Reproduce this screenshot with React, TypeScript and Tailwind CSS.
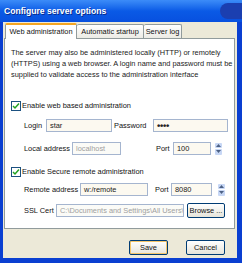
import React from "react";

const font = { fontFamily: '"Liberation Sans", Arial, sans-serif' };

function Check() {
  return (
    <div className="w-[10px] h-[10px] border border-[#1c5180] bg-white flex items-center justify-center shrink-0">
      <svg width="8" height="8" viewBox="0 0 8 8">
        <path d="M1 4 L3 6 L7 1.5" stroke="#21a121" strokeWidth="1.5" fill="none" />
      </svg>
    </div>
  );
}

function Spinner({ ml }: { ml: string }) {
  return (
    <div className={`w-[7px] h-[12px] flex flex-col gap-[1px] ${ml}`}>
      <div className="flex-1 bg-[#c7d7f5] rounded-[1px] flex items-center justify-center">
        <svg width="5" height="3" viewBox="0 0 5 3"><path d="M0 3 L2.5 0 L5 3Z" fill="#4d6185" /></svg>
      </div>
      <div className="flex-1 bg-[#c7d7f5] rounded-[1px] flex items-center justify-center">
        <svg width="5" height="3" viewBox="0 0 5 3"><path d="M0 0 L2.5 3 L5 0Z" fill="#4d6185" /></svg>
      </div>
    </div>
  );
}

function Input({ w, value, disabled, dots }: { w: string; value: string; disabled?: boolean; dots?: boolean }) {
  return (
    <div
      className={`${w} h-[13px] shrink-0 border border-[#a5b5cf] ${disabled ? "bg-[#fbfbf7] text-[#a0a0a0]" : "bg-[#fcf9f0] text-[#222]"} flex items-center pl-[3px] text-[7.4px] leading-none overflow-hidden whitespace-nowrap`}
    >
      {dots ? <span className="text-[9.5px] font-bold tracking-[-0.3px]">••••</span> : value}
    </div>
  );
}

const btn =
  "h-[15px] shrink-0 border border-[#003c74] rounded-[2px] bg-gradient-to-b from-white to-[#e6e4da] flex items-center justify-center text-[7.4px] whitespace-nowrap";

export default function App() {
  return (
    <div className="w-[242px] h-[263px] bg-[#0a3fd1] relative overflow-hidden text-[#111]" style={font}>
      {/* title bar */}
      <div className="h-[22px] bg-gradient-to-b from-[#3c8cf8] via-[#0a5ae6] to-[#0850df] relative flex items-center pl-[4px]">
        <span className="text-white font-bold text-[8.6px] [text-shadow:1px_1px_0_#0a2b8a] whitespace-nowrap">Configure server options</span>
        <div className="absolute right-[-10px] top-[3px] w-[32px] h-[16px] rounded-[8px] bg-[#1b3fb0]" />
      </div>
      {/* body */}
      <div className="absolute left-[3px] right-[5px] top-[22px] bottom-[5px] bg-[#ece9d8] flex flex-col">
        {/* tabs */}
        <div className="flex items-end h-[16px] pl-[2px] whitespace-nowrap">
          <div className="w-[72px] h-[16px] bg-white border border-b-0 border-[#919b9c] border-t-[2px] border-t-[#f5a623] rounded-t-[2px] text-[7.4px] flex items-center justify-center relative z-10 -mb-[1px]">
            Web administration
          </div>
          <div className="w-[67px] h-[14px] bg-gradient-to-b from-white to-[#ecebe5] border border-b-0 border-l-0 border-[#919b9c] rounded-t-[2px] text-[7.4px] flex items-center justify-center">
            Automatic startup
          </div>
          <div className="w-[38px] h-[14px] bg-gradient-to-b from-white to-[#ecebe5] border border-b-0 border-l-0 border-[#919b9c] rounded-t-[2px] text-[7.4px] flex items-center justify-center">
            Server log
          </div>
        </div>
        {/* panel */}
        <div className="ml-[1px] mr-[2px] h-[191px] shrink-0 bg-white border border-[#919b9c] pl-[6px] pr-[4px] pt-[8px] text-[7.4px] leading-[11px] whitespace-nowrap">
          <p className="text-[7.4px] leading-[11px] text-[#222]">
            The server may also be administered locally (HTTP) or remotely
            <br />
            (HTTPS) using a web browser. A login name and password must be
            <br />
            supplied to validate access to the administration interface
          </p>
          <div className="flex items-center gap-[1px] mt-[20px] h-[11px]">
            <Check />
            <span>Enable web based administration</span>
          </div>
          <div className="flex items-center mt-[8px] pl-[13px]">
            <span className="w-[22px] shrink-0">Login</span>
            <Input w="w-[66px]" value="star" />
            <span className="ml-[2px] w-[39px] shrink-0">Password</span>
            <Input w="w-[75px]" value="" dots />
          </div>
          <div className="flex items-center mt-[10px] pl-[13px]">
            <span className="w-[48px] shrink-0">Local address</span>
            <Input w="w-[49px]" value="localhost" disabled />
            <span className="ml-[35px] w-[17px] shrink-0">Port</span>
            <Input w="w-[38px]" value="100" />
            <Spinner ml="ml-[4px]" />
          </div>
          <div className="flex items-center gap-[1px] mt-[11px] h-[11px]">
            <Check />
            <span>Enable Secure remote administration</span>
          </div>
          <div className="flex items-center mt-[6px] pl-[13px]">
            <span className="w-[56px] shrink-0">Remote address</span>
            <Input w="w-[68px]" value="w:/remote" />
            <span className="ml-[7px] w-[16px] shrink-0">Port</span>
            <Input w="w-[41px]" value="8080" />
            <Spinner ml="ml-[6px]" />
          </div>
          <div className="flex items-center mt-[7px] pl-[13px]">
            <span className="w-[32px] shrink-0">SSL Cert</span>
            <Input w="w-[128px]" value="C:\Documents and Settings\All Users\" disabled />
            <div className={`${btn} ml-[3px] w-[38px]`}>Browse ...</div>
          </div>
        </div>
        {/* buttons */}
        <div className="flex mt-[11px] pl-[126px] gap-[18px]">
          <div className={`${btn} w-[39px] shadow-[inset_0_0_0_1px_#f5c66a]`}>Save</div>
          <div className={`${btn} w-[39px]`}>Cancel</div>
        </div>
      </div>
    </div>
  );
}
